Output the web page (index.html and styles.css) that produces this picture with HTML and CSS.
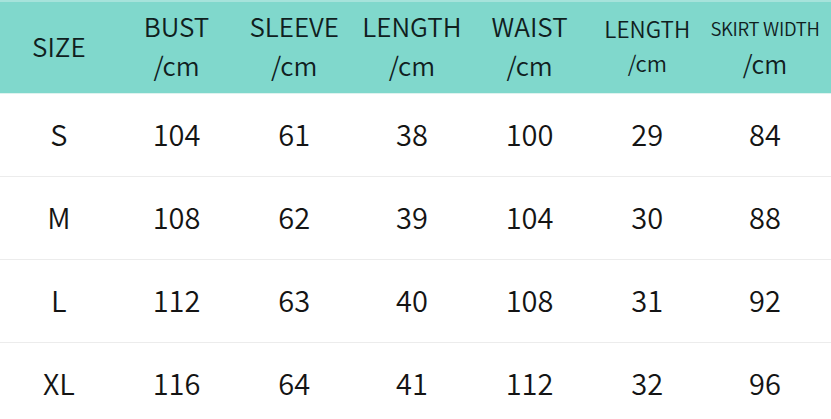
FILE: index.html
```html
<!DOCTYPE html>
<html>
<head>
<meta charset="utf-8">
<link rel="stylesheet" href="styles.css">
</head>
<body>
<div class="table">
  <div class="head">
    <div class="hcell"><span class="l1">SIZE</span></div>
    <div class="hcell"><span class="l1">BUST</span><span class="l2">/cm</span></div>
    <div class="hcell"><span class="l1">SLEEVE</span><span class="l2">/cm</span></div>
    <div class="hcell"><span class="l1">LENGTH</span><span class="l2">/cm</span></div>
    <div class="hcell"><span class="l1">WAIST</span><span class="l2">/cm</span></div>
    <div class="hcell small"><span class="l1">LENGTH</span><span class="l2">/cm</span></div>
    <div class="hcell tiny"><span class="l1">SKIRT WIDTH</span><span class="l2">/cm</span></div>
  </div>
  <div class="row"><div>S</div><div>104</div><div>61</div><div>38</div><div>100</div><div>29</div><div>84</div></div>
  <div class="row"><div>M</div><div>108</div><div>62</div><div>39</div><div>104</div><div>30</div><div>88</div></div>
  <div class="row"><div>L</div><div>112</div><div>63</div><div>40</div><div>108</div><div>31</div><div>92</div></div>
  <div class="row last"><div>XL</div><div>116</div><div>64</div><div>41</div><div>112</div><div>32</div><div>96</div></div>
</div>
</body>
</html>
```
FILE: styles.css
```css
html, body {
  margin: 0;
  padding: 0;
  background: #ffffff;
  overflow: hidden;
}
body {
  width: 831px;
  height: 419px;
  font-family: "Noto Sans CJK SC", "Noto Sans", sans-serif;
  font-weight: 350;
  color: #141414;
}
.table {
  width: 831px;
}
.head {
  display: grid;
  grid-template-columns: repeat(7, 117.7px);
  height: 91px;
  border-top: 2px solid #a6e3db;
  border-bottom: 1px solid #def3ef;
  background: #80d8cc;
}
.hcell {
  display: flex;
  flex-direction: column;
  align-items: center;
  justify-content: center;
  font-size: 26px;
  line-height: 39px;
  padding-bottom: 5px;
  color: #10201e;
}
.hcell.small {
  font-size: 22.5px;
  line-height: 34px;
}
.hcell.small .l2 {
  font-size: 22px;
}
.hcell.tiny {
  font-size: 18.5px;
  line-height: 35px;
  letter-spacing: -0.3px;
}
.hcell.tiny .l1 {
  padding-top: 2px;
}
.hcell.tiny .l2 {
  font-size: 25px;
  letter-spacing: 0;
}
.row {
  display: grid;
  grid-template-columns: repeat(7, 117.7px);
  height: 82px;
  border-bottom: 1px solid #ececec;
  align-items: center;
  font-size: 29px;
}
.row > div {
  text-align: center;
  margin-top: -4px;
}
.row.last {
  border-bottom: none;
}
```
